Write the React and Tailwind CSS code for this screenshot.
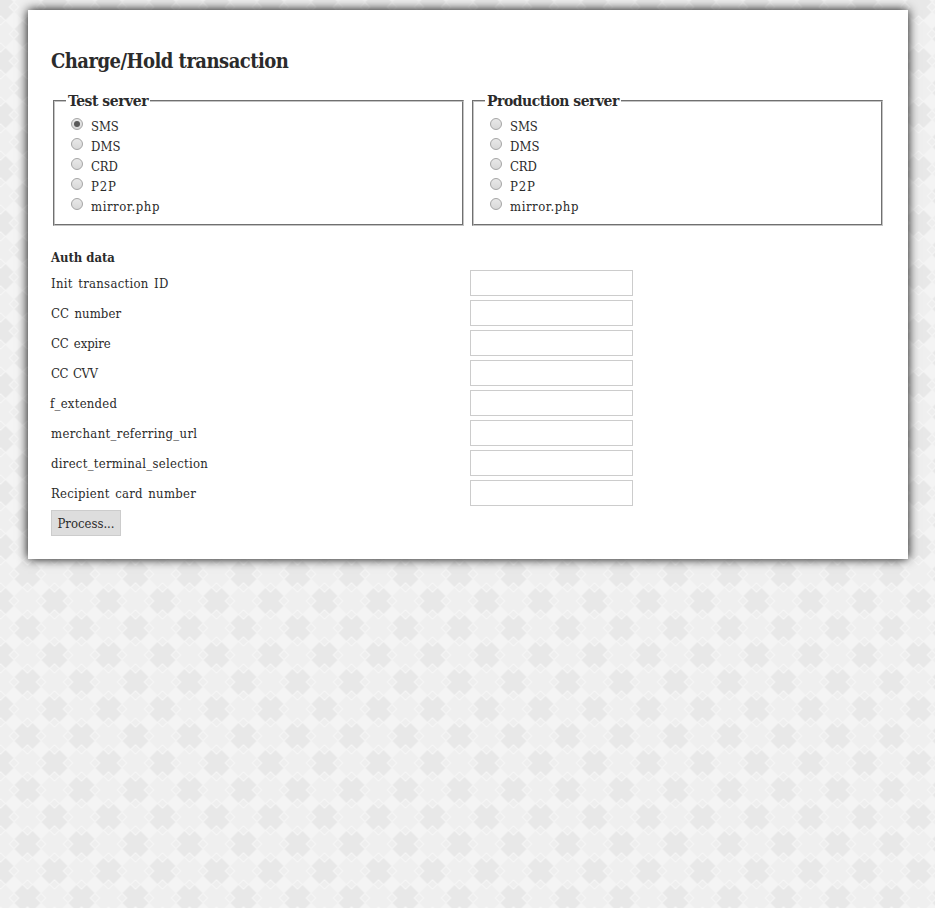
const FIELDS = [
  ["Init transaction ID", "tracking-[0.28px]"],
  ["CC number", "tracking-[0.1px]"],
  ["CC expire", "tracking-[-0.1px]"],
  ["CC CVV", "tracking-[-0.4px]"],
  ["f_extended", "tracking-[0.25px] -ml-px mr-px"],
  ["merchant_referring_url", "tracking-[0.33px]"],
  ["direct_terminal_selection", "tracking-[0.28px]"],
  ["Recipient card number", "tracking-[0.26px]"],
];

const OPTIONS = [
  ["SMS", "tracking-[-0.1px]"],
  ["DMS", "tracking-[0.1px]"],
  ["CRD", "tracking-[-0.1px]"],
  ["P2P", "tracking-[0.8px]"],
  ["mirror.php", "tracking-[0.55px]"],
];

const CROSS = "M0-8L5-13L13-5L8 0L13 5L5 13L0 8L-5 13L-13 5L-8 0L-13-5L-5-13Z";
const DIAMOND = "M0-4.5L4.5 0L0 4.5L-4.5 0Z";
const STEPS = [0, 27, 54];

function Backdrop() {
  return (
    <svg className="absolute inset-0 -z-10 h-full w-full" aria-hidden="true">
      <defs>
        <pattern id="crosses" width="54" height="54" x="0.5" y="7" patternUnits="userSpaceOnUse">
          <rect width="54" height="54" fill="#f4f4f4" />
          {STEPS.map((x) =>
            STEPS.map((y) => (
              <path
                key={`${x}-${y}`}
                d={CROSS}
                transform={`translate(${x} ${y})`}
                fill={(x + y) % 54 === 0 ? "#e8e8e8" : "#efefef"}
              />
            )),
          )}
          {STEPS.map((x) =>
            STEPS.map((y) => (
              <g key={`${x}-${y}`} fill="#eeeeee" stroke="#f6f6f6">
                <path d={DIAMOND} transform={`translate(${x + 13.5} ${y})`} />
                <path d={DIAMOND} transform={`translate(${x} ${y + 13.5})`} />
              </g>
            )),
          )}
        </pattern>
      </defs>
      <rect width="100%" height="100%" fill="url(#crosses)" />
    </svg>
  );
}

function ServerGroup({ title, titleClass, selected }) {
  return (
    <fieldset className="h-[135px] w-[411px] border-2 [border-style:groove] border-[#c4c4c4] pl-[11px]">
      <legend className={`h-[20px] px-[2px] text-[15.5px] leading-[20px] font-bold whitespace-nowrap ${titleClass}`}>{title}</legend>
      <div className="pt-[6px]">
        {OPTIONS.map(([name, tracking]) => (
          <label key={name} className="flex h-5 items-start pl-[5px]">
            <span className="mt-px flex size-[12px] items-center justify-center rounded-full border border-[#a5a5a5] bg-linear-to-b from-[#e8e8e8] to-[#d8d8d8]">
              {selected === name && <span className="size-[6px] rounded-full bg-[#5a5a5a]" />}
            </span>
            <span className={`ml-2 leading-5 ${tracking}`}>{name}</span>
          </label>
        ))}
      </div>
    </fieldset>
  );
}

export default function App() {
  return (
    <div className="relative isolate h-[908px] overflow-hidden pt-[10px] font-['DejaVu_Serif_Condensed','DejaVu_Serif',serif] text-[13px] text-[#2b2b2b]">
      <Backdrop />
      <main className="ml-[28px] h-[549px] w-[880px] bg-white px-[23px] pt-[36px] shadow-[0_0_10px_#000]">
        <h1 className="text-[20px] leading-[30px] font-bold whitespace-nowrap tracking-[-0.52px]">Charge/Hold transaction</h1>
        <div className="mt-[15px] flex gap-[8px] pl-[2px]">
          <ServerGroup title="Test server" titleClass="tracking-[-0.45px]" selected="SMS" />
          <ServerGroup title="Production server" titleClass="tracking-[-0.48px]" />
        </div>
        <h2 className="mt-[22px] leading-[20px] font-bold tracking-[-0.05px]">Auth data</h2>
        <div>
          {FIELDS.map(([name, tracking]) => (
            <label key={name} className="flex h-[30px] items-center">
              <span className={`w-[419px] pt-px whitespace-nowrap [word-spacing:1.5px] ${tracking}`}>{name}</span>
              <input type="text" className="h-[26px] w-[163px] border border-[#ccc] bg-white" />
            </label>
          ))}
        </div>
        <button className="mt-[2px] block h-[26px] w-[70px] border border-[#ccc] bg-[#ddd] text-center leading-[25px]">Process...</button>
      </main>
    </div>
  );
}
